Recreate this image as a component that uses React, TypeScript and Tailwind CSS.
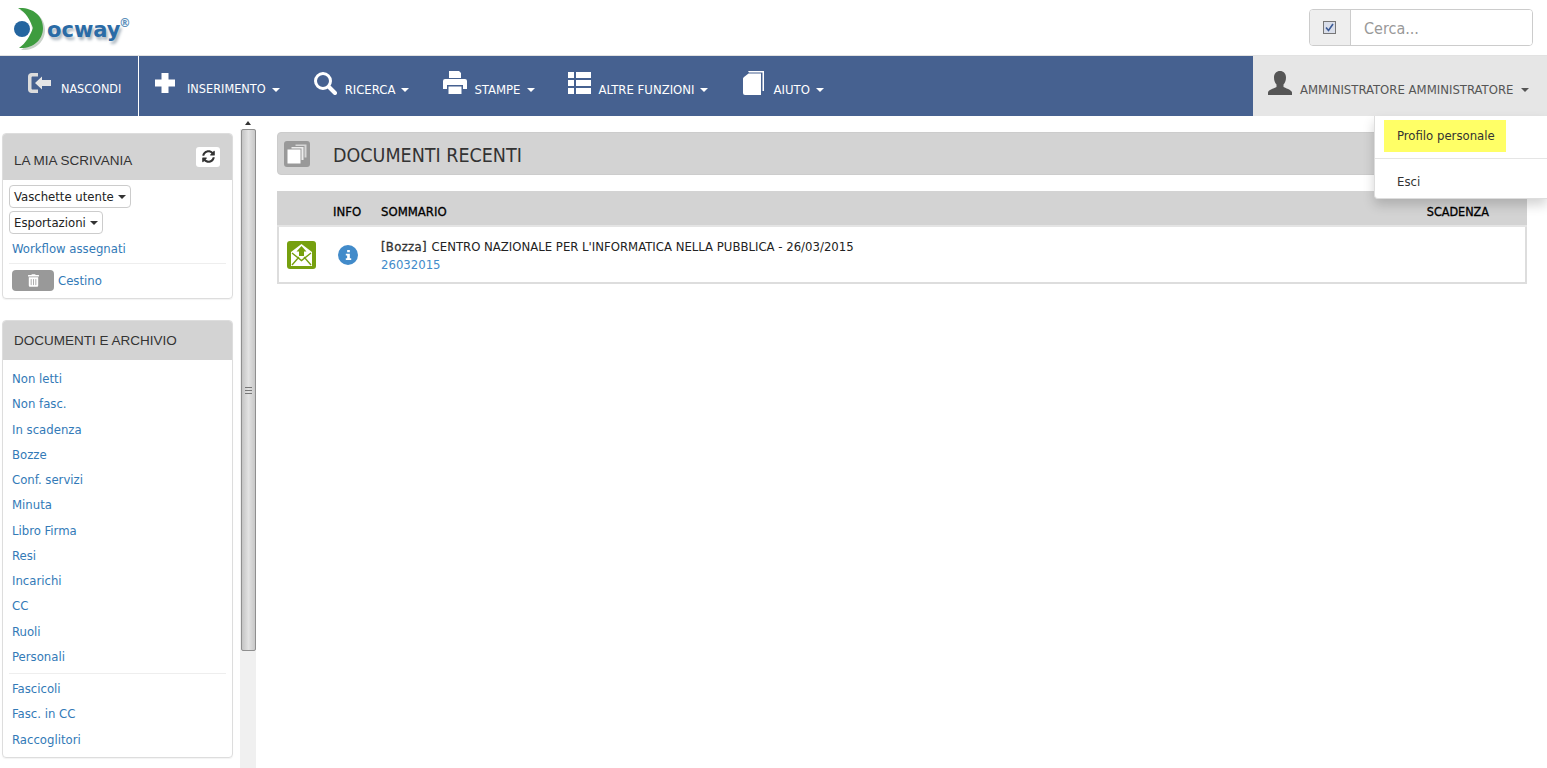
import { FaSyncAlt, FaTrashAlt } from "react-icons/fa";

const font = "font-['DejaVu_Sans_Condensed','DejaVu_Sans',sans-serif]";

const PlusIcon = () => (
  <svg viewBox="0 0 20 20" className="w-[20px] h-[20px]"><path d="M6.500 0h7v6.500H20v7h-6.500V20h-7v-6.500H0v-7h6.500z" fill="#fff" /></svg>
);
const SearchIcon = () => (
  <svg viewBox="0 0 24 24" className="w-[24px] h-[24px]" fill="none" stroke="#fff">
    <circle cx="10" cy="10" r="7.500" strokeWidth="3" />
    <path d="M16 16l6 6" strokeWidth="4" strokeLinecap="round" />
  </svg>
);
const PrintIcon = () => (
  <svg viewBox="0 0 24 23" className="w-[24px] h-[23px]" fill="#fff">
    <path d="M6 0h10l2 2v5H6z" />
    <path d="M2 8h20a2 2 0 0 1 2 2v8h-4v-4H4v4H0v-8a2 2 0 0 1 2-2z" />
    <path d="M5.500 15.500h13V23h-13z" />
  </svg>
);
const ListIcon = () => (
  <svg viewBox="0 0 23 22" className="w-[23px] h-[22px]" fill="#fff">
    <path d="M0 0h6v6H0zM8 0h15v6H8zM0 8h6v6H0zM8 8h15v6H8zM0 16h6v6H0zM8 16h15v6H8z" />
  </svg>
);
const BookIcon = () => (
  <svg viewBox="0 0 21 24" className="w-[21px] h-[24px]" fill="#fff">
    <path d="M5 0h16v20h-1.500V1.500H6z" />
    <path d="M5.500 2.500H18V24H2a2 2 0 0 1-2-2V8c0-1 .5-1.500 1-2z" />
  </svg>
);

const navItems = [
  { label: "INSERIMENTO", icon: <PlusIcon />, ml: "ml-[16px]", w: "w-[20px]", gap: "gap-[12px]", size: "text-[12.6px]", caret: "-ml-[6px]" },
  { label: "RICERCA", icon: <SearchIcon />, ml: "ml-[33px]", w: "w-[24px]", gap: "gap-[8px]", size: "text-[13px]", caret: "-ml-[2px]" },
  { label: "STAMPE", icon: <PrintIcon />, ml: "ml-[34px]", w: "w-[24px]", gap: "gap-[7px]", size: "text-[13px]", caret: "-ml-[1px]" },
  { label: "ALTRE FUNZIONI", icon: <ListIcon />, ml: "ml-[33px]", w: "w-[23px]", gap: "gap-[8px]", size: "text-[13px]", caret: "-ml-[2px]" },
  { label: "AIUTO", icon: <BookIcon />, ml: "ml-[35px]", w: "w-[21px]", gap: "gap-[9px]", size: "text-[13px]", caret: "-ml-[3px]" },
];

const archive1 = ["Non letti", "Non fasc.", "In scadenza", "Bozze", "Conf. servizi", "Minuta", "Libro Firma", "Resi", "Incarichi", "CC", "Ruoli", "Personali"];
const archive2 = ["Fascicoli", "Fasc. in CC", "Raccoglitori"];

function Caret({ className }: { className: string }) {
  return <span className={`inline-block w-0 h-0 border-x-[4px] border-x-transparent border-t-[4px] ${className}`} />;
}

function Logo() {
  return (
    <div className="relative w-[135px] h-[54px] ml-[14px]">
      <svg viewBox="0 0 50 54" className="absolute left-0 top-0 w-[50px] h-[54px]">
        <path d="M6 9 C20 8 31 16 31 29 C31 41 21 50 7 49 C14 44 18 37 18 29 C18 21 14 13 6 9Z" fill="#c9d2c9" />
        <circle cx="8" cy="28" r="8" fill="#24659f" />
        <path d="M4 7 C18 6 29 14 29 27 C29 39 19 48 5 47 C12 42 16 35 19 27 C16 19 12 11 4 7Z" fill="#3e9c3f" />
      </svg>
      <span className="absolute left-[33px] top-[14px] text-[21px] leading-[30px] font-bold text-[#2a6ba6] font-['DejaVu_Sans',sans-serif] [text-shadow:2px_3px_3px_#a9b4be]">ocway</span>
      <span className="absolute left-[105px] top-[16px] text-[13px] leading-[12px] font-bold text-[#5d8fbb]">®</span>
    </div>
  );
}

function SideLink({ text }: { text: string }) {
  return <a className="block text-[13px] leading-[18px] h-[25.25px] pt-[3px] text-[#337ab7]">{text}</a>;
}

export default function App() {
  return (
    <div className={`${font} h-[768px] w-full overflow-hidden bg-white text-[#222] flex flex-col relative`}>
      <header className="h-[56px] shrink-0 border-b border-[#e2e2e2] flex items-center justify-between">
        <Logo />
        <div className="flex h-[37px] w-[224px] mr-[14px] -mt-[1px] border border-[#ccc] rounded-[4px] overflow-hidden">
          <div className="w-[41px] bg-[#eee] border-r border-[#ccc] flex items-center justify-center">
            <svg viewBox="0 0 13 13" className="w-[13px] h-[13px] -ml-[2px]">
              <rect x="0.5" y="0.5" width="12" height="12" fill="#d9deea" stroke="#777" />
              <path d="M3 6.500 L5.500 9.500 L10 3" fill="none" stroke="#3b5a96" strokeWidth="1.600" />
            </svg>
          </div>
          <div className="flex-1 pl-[13px] pt-[1px] text-[16px] leading-[35px] text-[#999] bg-white">Cerca...</div>
        </div>
      </header>

      <nav className="h-[60px] shrink-0 bg-[#466190] flex text-white">
        <div className="w-[139px] border-r border-white flex items-center pl-[27px] gap-[8px]">
          <svg viewBox="0 0 26 22" className="w-[26px] h-[22px] -mt-[6px]">
            <path d="M11 1H4.500C2.500 1 1 2.500 1 4.500v13C1 19.500 2.500 21 4.500 21H11v-3.500H5.500c-.5 0-1-.5-1-1v-11c0-.5.500-1 1-1H11z" fill="#dcdcdc" />
            <path d="M8 11l7-6.500V8h9v6h-9v3.500z" fill="#e6e6e6" />
          </svg>
          <span className="text-[12.5px] pt-[7px]">NASCONDI</span>
        </div>
        {navItems.map((item) => (
          <div key={item.label} className={`flex items-center ${item.ml} ${item.gap}`}>
            <span className={`${item.w} -mt-[7px]`}>{item.icon}</span>
            <span className={`${item.size} pt-[7px]`}>{item.label}</span>
            <Caret className={`border-t-white mt-[7px] ${item.caret}`} />
          </div>
        ))}
        <div className="ml-auto w-[294px] bg-[#e6e6e6] text-[#555] flex items-center pl-[15px] gap-[8px]">
          <svg viewBox="0 0 24 24" className="w-[24px] h-[24px] -mt-[7px]" fill="#555">
            <path d="M12 0c3.500 0 6 2.500 6 6.500 0 3-1 5.500-2.500 7v2.500c1 .8 8.500 3 8.500 5.500V24H0v-2.500C0 19 7.500 16.800 8.500 16v-2.500C7 12 6 9.500 6 6.500 6 2.500 8.500 0 12 0z" />
          </svg>
          <span className="text-[13px] pt-[7px] whitespace-nowrap">AMMINISTRATORE AMMINISTRATORE</span>
          <Caret className="border-t-[#555] mt-[7px]" />
        </div>
      </nav>

      <div className="flex flex-1 min-h-0">
        <aside className="w-[240px] shrink-0 pl-[2px] pr-[7px] pt-[17px] flex flex-col gap-[21px]">
          <section className="h-[166px] border border-[#ddd] rounded-[4px] shadow-[0_1px_1px_rgba(0,0,0,0.05)] overflow-hidden">
            <div className="h-[46px] bg-[#d3d3d3] flex items-center justify-between pl-[11px] pr-[12px]">
              <h3 className="text-[13.5px] mt-[8px] text-[#333] font-['Liberation_Sans',sans-serif]">LA MIA SCRIVANIA</h3>
              <span className="w-[24px] h-[20px] bg-white rounded-[3px] flex items-center justify-center -mt-[1px]">
                <FaSyncAlt className="w-[13px] h-[13px] text-[#333]" />
              </span>
            </div>
            <div className="px-[6px] pt-[5px]">
              <div className="flex flex-col items-start gap-[3px]">
                <span className="h-[23px] px-[4px] border border-[#ccc] rounded-[4px] text-[13px] flex items-center gap-[4px]">
                  Vaschette utente <Caret className="border-t-[#333]" />
                </span>
                <span className="h-[23px] px-[4px] border border-[#ccc] rounded-[4px] text-[13px] flex items-center gap-[4px]">
                  Esportazioni <Caret className="border-t-[#333]" />
                </span>
              </div>
              <a className="block mt-[6px] ml-[3px] text-[13px] leading-[18px] text-[#337ab7]">Workflow assegnati</a>
              <div className="border-t border-[#eee] mt-[5px] pt-[6px] flex items-center gap-[4px] pl-[3px]">
                <span className="w-[42px] h-[21px] bg-[#999] rounded-[4px] flex items-center justify-center">
                  <FaTrashAlt className="w-[11px] h-[13px] text-white" />
                </span>
                <a className="text-[13px] text-[#337ab7]">Cestino</a>
              </div>
            </div>
          </section>

          <section className="h-[438px] border border-[#ddd] rounded-[4px] shadow-[0_1px_1px_rgba(0,0,0,0.05)] overflow-hidden">
            <div className="h-[39px] bg-[#d3d3d3] flex items-center pl-[11px]">
              <h3 className="text-[13.5px] pt-[1px] text-[#333] font-['Liberation_Sans',sans-serif]">DOCUMENTI E ARCHIVIO</h3>
            </div>
            <div className="px-[9px] pt-[7px]">
              {archive1.map((t) => <SideLink key={t} text={t} />)}
              <div className="border-t border-[#eee] -mx-[3px] mt-[3px] pt-[3px]">
                <div className="mx-[3px]">
                  {archive2.map((t) => <SideLink key={t} text={t} />)}
                </div>
              </div>
            </div>
          </section>
        </aside>

        <div className="w-[16px] shrink-0 bg-[#f0f0f0] flex flex-col items-center">
          <div className="h-[13px] w-full bg-white flex items-center justify-center">
            <span className="w-0 h-0 border-x-[3px] border-x-transparent border-b-[4px] border-b-[#333]" />
          </div>
          <div className="w-[15px] h-[522px] bg-gradient-to-r from-[#c4c4c4] via-[#e2e2e2] to-[#c8c8c8] border border-[#8f8f8f] rounded-[2px] flex flex-col items-center justify-center gap-[2px]">
            <span className="w-[7px] h-px bg-[#777]" />
            <span className="w-[7px] h-px bg-[#777]" />
            <span className="w-[7px] h-px bg-[#777]" />
          </div>
        </div>

        <main className="flex-1 min-w-0 pl-[21px] pr-[20px] pt-[16px]">
          <div className="h-[43px] bg-[#d3d3d3] border border-[#ccc] rounded-[4px] flex items-center pl-[6px] gap-[23px]">
            <svg viewBox="0 0 26 26" className="w-[26px] h-[26px]">
              <rect width="26" height="26" rx="3" fill="#999" />
              <rect x="11" y="3" width="12" height="14" fill="#d6d6d6" stroke="#999" />
              <rect x="7" y="5.500" width="13" height="14" fill="#ececec" stroke="#999" />
              <rect x="3" y="8" width="14" height="15" fill="#fff" stroke="#999" />
            </svg>
            <h1 className="text-[19.5px] text-[#333] pt-[5px]">DOCUMENTI RECENTI</h1>
          </div>

          <div className="mt-[16px] border-2 border-[#ddd] border-t-0">
            <div className="h-[36px] -mx-[2px] bg-[#d3d3d3] border-b-[2px] border-[#e4e4e4] flex items-center text-[13px] text-[#000] [-webkit-text-stroke:0.3px_#000] pt-[8px]">
              <span className="ml-[56px] w-[48px]">INFO</span>
              <span>SOMMARIO</span>
              <span className="ml-auto mr-[38px] text-[12.5px]">SCADENZA</span>
            </div>
            <div className="h-[55px] flex items-center">
              <svg viewBox="0 0 29 28" className="ml-[8px] mt-[1px] w-[29px] h-[28px]">
                <rect width="29" height="28" rx="3" fill="#76a00f" />
                <path d="M4 11 L14.500 3 L25 11 V25 H4Z" fill="#fff" />
                <path d="M5 24 L12 16 M24 24 L17 16 M5 12 L14.500 19.500 L24 12" fill="none" stroke="#76a00f" strokeWidth="1.400" />
                <path d="M14.500 5 L19.500 10.500 H17 V15 H12 V10.500 H9.500Z" fill="#76a00f" />
              </svg>
              <span className="ml-[22px] w-[20px] h-[20px] rounded-full bg-[#428bca] flex items-center justify-center">
                <svg viewBox="0 0 10 11" className="w-[9px] h-[10px]" fill="#fff">
                  <path d="M3.500 0h3v2.500h-3zM2 4h4.500v5H8v2H2V9h1.500V6H2z" />
                </svg>
              </span>
              <div className="ml-[23px] text-[13px] leading-[18px] mt-[3px]">
                <div><span className="mr-[1px] tracking-[0.3px] text-[#333] [-webkit-text-stroke:0.3px_#333]">[Bozza]</span> CENTRO NAZIONALE PER L'INFORMATICA NELLA PUBBLICA - 26/03/2015</div>
                <a className="block text-[#428bca]">26032015</a>
              </div>
            </div>
          </div>
        </main>
      </div>

      <div className="absolute left-[1374px] top-[116px] right-0 h-[83px] bg-white border-l border-b border-[#ddd] rounded-bl-[4px] shadow-[0_6px_12px_rgba(0,0,0,0.175)]">
        <div className="ml-[9px] mt-[4px] w-[122px] h-[32px] bg-[#ffff66] flex items-center pl-[13px] text-[13px] text-[#333]">Profilo personale</div>
        <div className="border-t border-[#e5e5e5] mt-[6px]" />
        <div className="pl-[22px] mt-[14px] text-[13px] leading-[18px] text-[#333]">Esci</div>
      </div>
    </div>
  );
}
